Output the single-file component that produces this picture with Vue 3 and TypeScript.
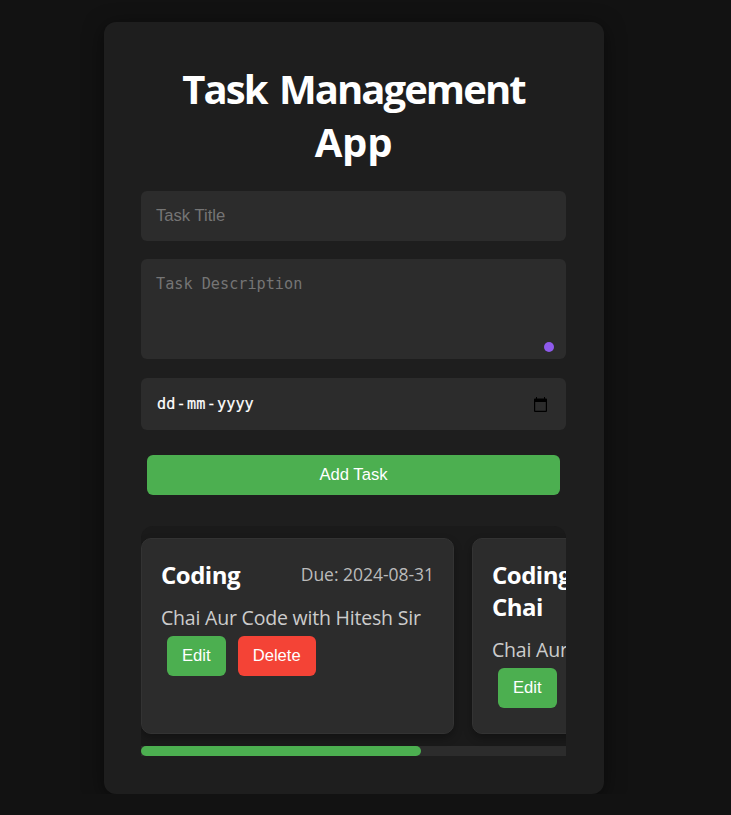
<script setup lang="ts">
import { ref } from 'vue'

interface Task {
  id: number
  title: string
  due: string
  description: string
}

const title = ref('')
const description = ref('')
const tasks = ref<Task[]>([
  { id: 1, title: 'Coding', due: '2024-08-31', description: 'Chai Aur Code with Hitesh Sir' },
  { id: 2, title: 'Coding Chai', due: '2024-08-31', description: 'Chai Aur Code' },
])

function removeTask(id: number) {
  tasks.value = tasks.value.filter((task) => task.id !== id)
}
</script>

<template>
  <main class="container">
    <h1><span class="tight">Task Management</span><br />App</h1>
    <form class="form" @submit.prevent>
      <input v-model="title" class="field title-input" type="text" placeholder="Task Title" />
      <div class="area-wrap">
        <textarea v-model="description" class="field area" placeholder="Task Description"></textarea>
        <span class="dot"></span>
      </div>
      <div class="field date">
        <span class="date-text"><span>dd</span><span>-</span><span>mm</span><span>-</span><span>yyyy</span></span>
        <svg class="calendar" width="13" height="15" viewBox="0 0 13 15">
          <path d="M2 0h1v1.5h7V0h1v1.5h1q1 0 1 1V14q0 1-1 1H1q-1 0-1-1V2.500q0-1 1-1h1zM1.200 5v8.800h10.600V5z" fill="#000" fill-rule="evenodd" />
        </svg>
      </div>
      <button class="btn add" type="submit">Add Task</button>
    </form>
    <section class="list">
      <div class="track">
        <article v-for="task in tasks" :key="task.id" class="card">
          <header class="card-head">
            <h3>{{ task.title }}</h3>
            <span class="due">Due: {{ task.due }}</span>
          </header>
          <p>{{ task.description }}</p>
          <div class="actions">
            <button class="btn" type="button">Edit</button>
            <button class="btn delete" type="button" @click="removeTask(task.id)">Delete</button>
          </div>
        </article>
      </div>
      <div class="scrollbar"><div class="thumb"></div></div>
    </section>
  </main>
</template>

<style>
body {
  background: #121212;
  overflow: hidden;
}
</style>

<style scoped>
* {
  box-sizing: border-box;
}
.container {
  width: 500px;
  height: 772px;
  margin: 22px 0 0 104px;
  padding: 40px 38px 38px 37px;
  background: #1e1e1e;
  border-radius: 12px;
  box-shadow: 0 4px 20px rgba(0, 0, 0, 0.5);
  color: #fff;
  font-family: 'Open Sans', 'Noto Sans', sans-serif;
}
h1 {
  margin: 0 0 23px;
  font-size: 40px;
  line-height: 53px;
  font-weight: 700;
  letter-spacing: -0.2px;
  text-align: center;
  white-space: nowrap;
}
.tight {
  letter-spacing: -1.95px;
  word-spacing: 4px;
}
.form {
  display: flex;
  flex-direction: column;
}
.field {
  display: block;
  width: 100%;
  margin: 0;
  padding: 15px;
  border: 0;
  outline: 0;
  border-radius: 6px;
  background: #2c2c2c;
  color: #fff;
  resize: none;
}
.field::placeholder {
  color: #757575;
  opacity: 1;
}
.title-input {
  height: 50px;
  font: 16.64px 'Liberation Sans', sans-serif;
}
.area-wrap {
  position: relative;
  margin: 18px 0 19px;
}
.area {
  height: 100px;
  font: 15.2px/20px 'DejaVu Sans Mono', monospace;
}
.dot {
  position: absolute;
  right: 12px;
  bottom: 7px;
  width: 10px;
  height: 10px;
  border-radius: 50%;
  background: #8e5aeb;
}
.date {
  display: flex;
  align-items: center;
  justify-content: space-between;
  height: 52px;
  padding: 0 19px 0 16px;
  font: 15.2px 'DejaVu Sans Mono', monospace;
}
.date-text {
  display: flex;
  gap: 1.3px;
  -webkit-text-stroke: 0.2px #fff;
}
.calendar {
  display: block;
}
.btn {
  height: 40px;
  margin: 0 6px;
  padding: 0 15px;
  border: 0;
  border-radius: 6px;
  background: #4caf50;
  color: #fff;
  font: 16.64px 'Liberation Sans', sans-serif;
}
.add {
  margin-top: 25px;
}
.delete {
  background: #f44336;
}
.list {
  height: 230px;
  margin-top: 31px;
  overflow: hidden;
  border-radius: 12px 12px 0 0;
  background: #1a1a1a;
}
.track {
  display: flex;
  gap: 18px;
  height: 220px;
  padding: 12px 0;
}
.card {
  flex: 0 0 313px;
  padding: 20px 19px;
  border: 1px solid #333;
  border-radius: 10px;
  background: #2c2c2c;
  box-shadow: 0 4px 8px rgba(0, 0, 0, 0.3);
}
.card-head {
  display: flex;
  justify-content: space-between;
  align-items: flex-start;
}
h3 {
  width: 110px;
  margin: 0;
  font-size: 24px;
  line-height: 32px;
  font-weight: 700;
  letter-spacing: -0.5px;
}
.due {
  color: #bbb;
  font-size: 17.5px;
  line-height: 31px;
  letter-spacing: -0.03px;
  white-space: nowrap;
}
p {
  margin: 13px 0 4px;
  color: #ccc;
  font-size: 19.5px;
  line-height: 28px;
  letter-spacing: -0.2px;
  white-space: nowrap;
}
.actions {
  display: flex;
}
.scrollbar {
  height: 10px;
  background: #2c2c2c;
}
.thumb {
  width: 280px;
  height: 10px;
  border-radius: 5px;
  background: #4caf50;
}
</style>
